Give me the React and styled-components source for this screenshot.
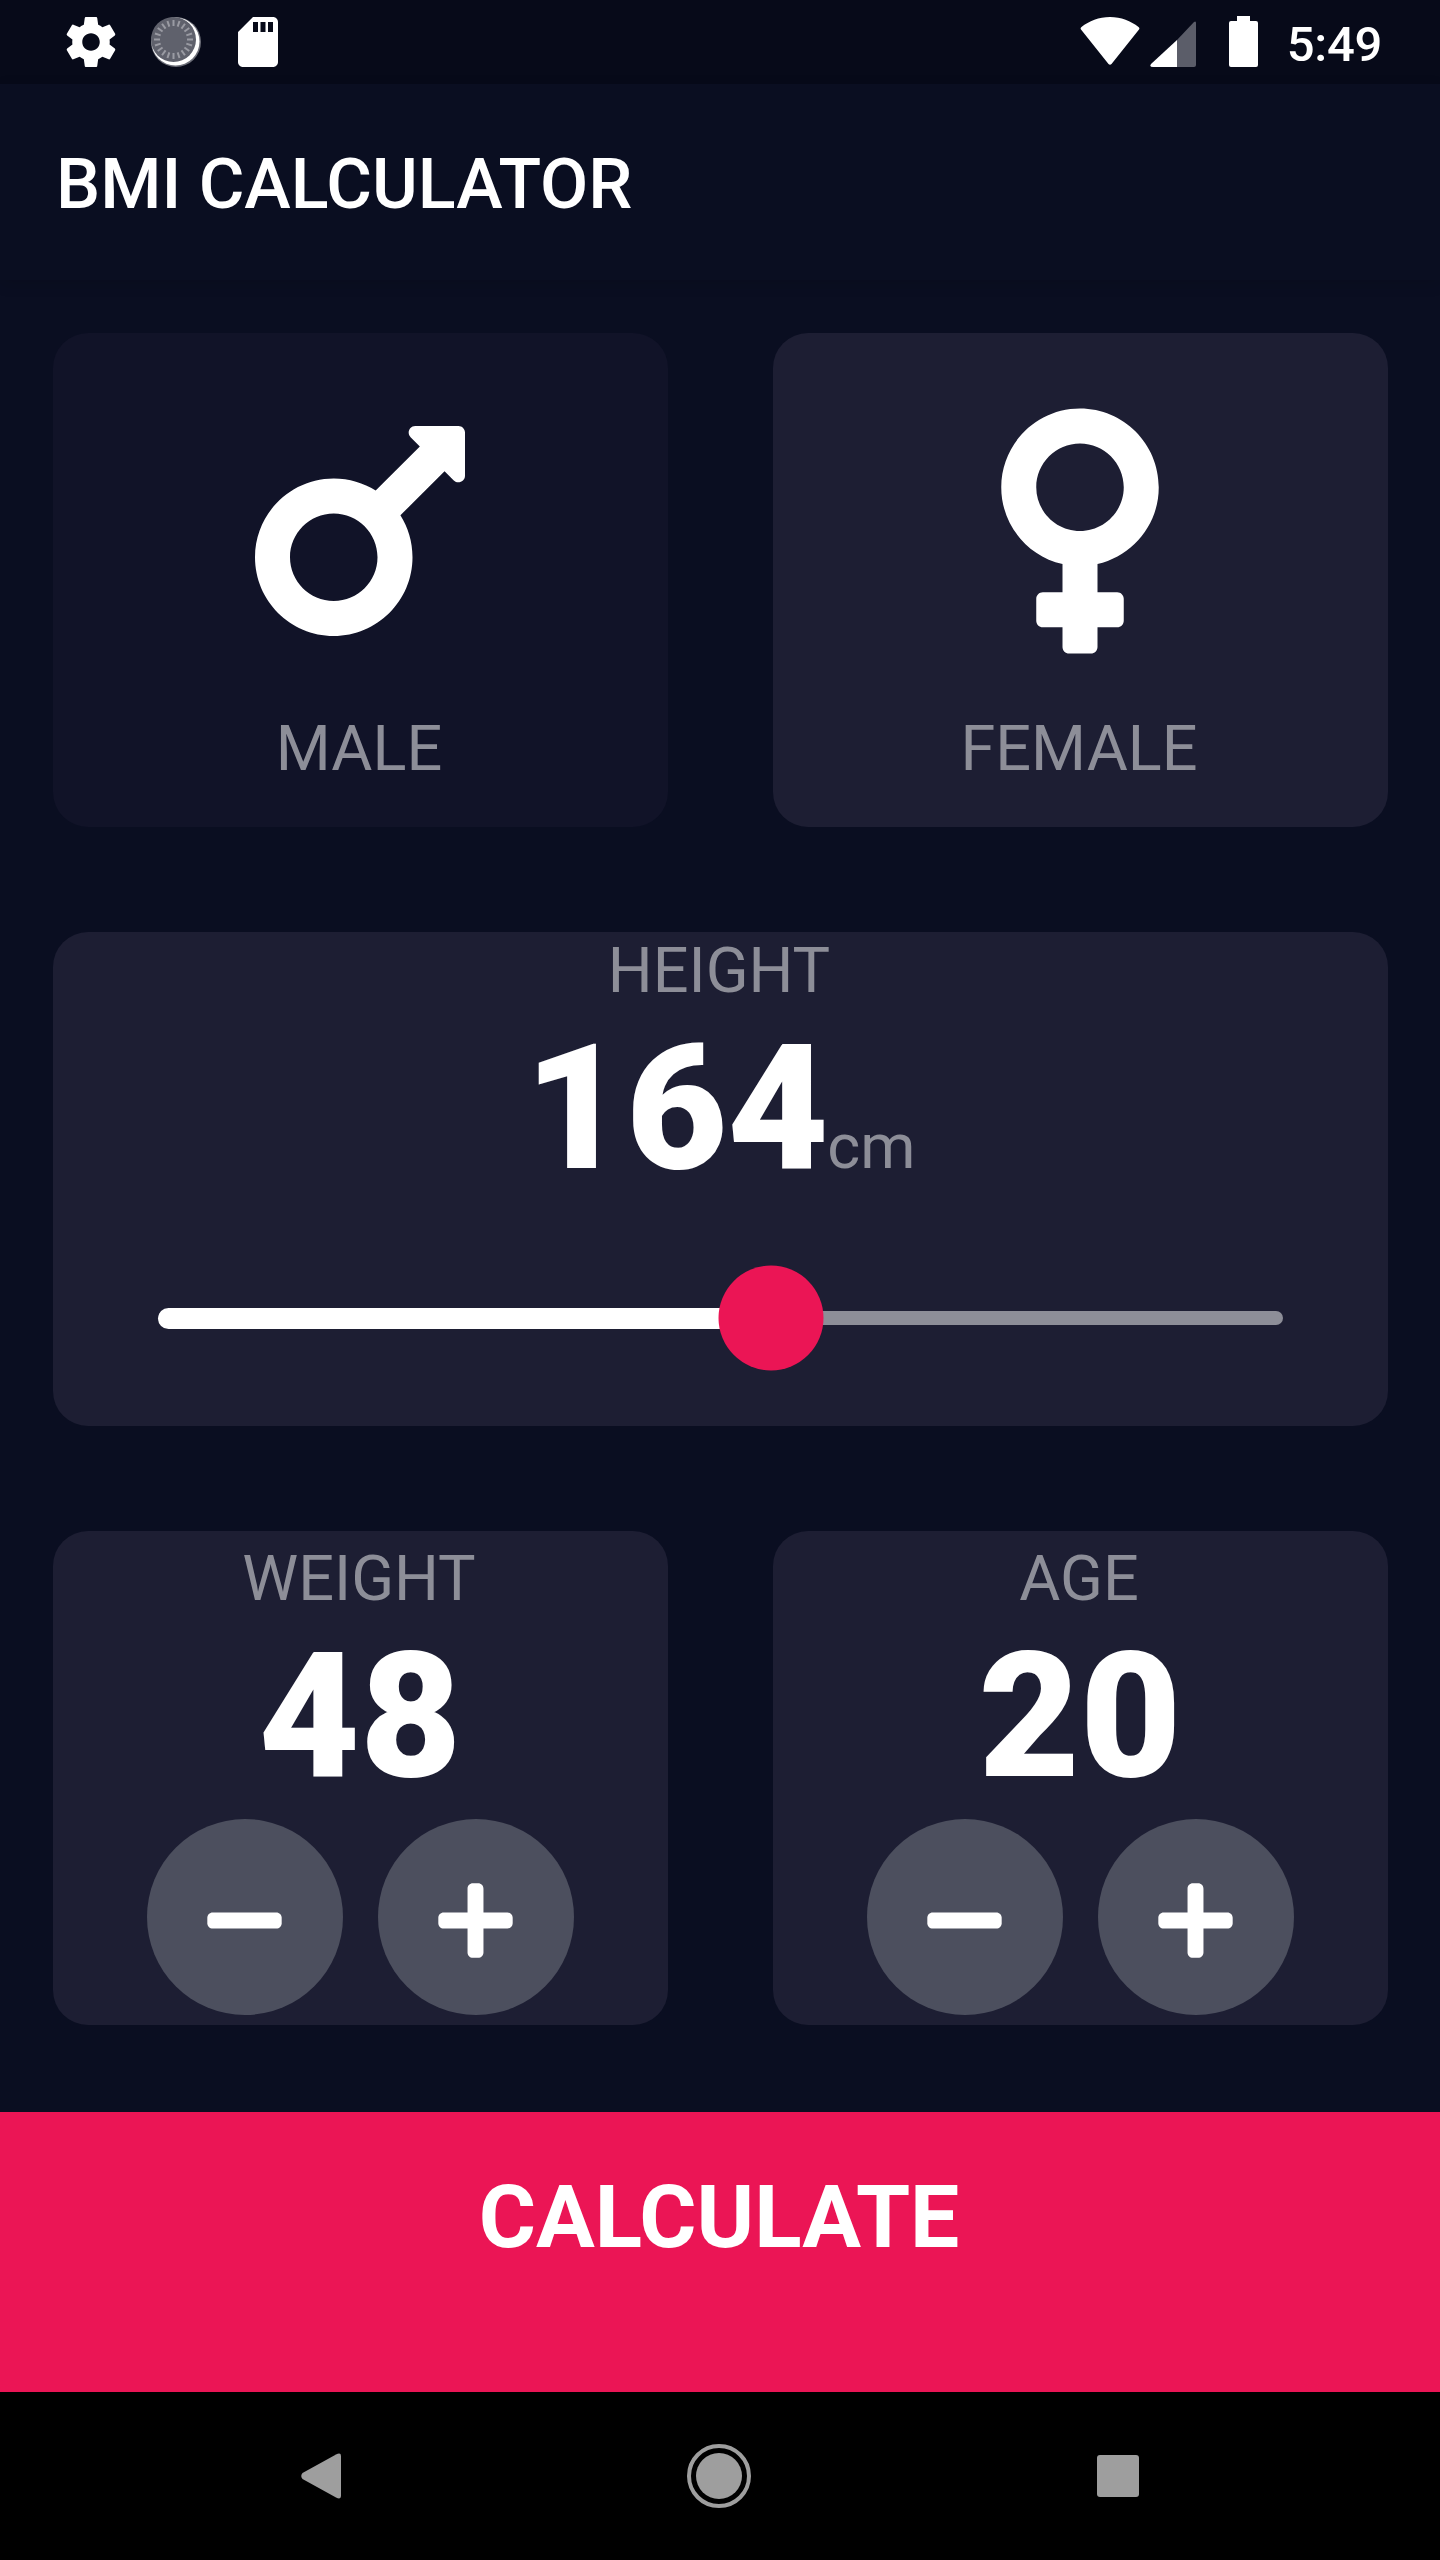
import React from 'react'
import styled, { createGlobalStyle } from 'styled-components'
import { FaMars, FaVenus, FaPlus, FaMinus } from 'react-icons/fa'

const GlobalStyle = createGlobalStyle`
  html, body {
    margin: 0;
    padding: 0;
    background: #0a0e21;
  }
  * {
    box-sizing: border-box;
  }
`

const Screen = styled.div`
  width: 1440px;
  height: 2560px;
  display: flex;
  flex-direction: column;
  overflow: hidden;
  background: #0a0e21;
  color: #fff;
  font-family: Roboto, "Liberation Sans", sans-serif;
`

const StatusBar = styled.div`
  height: 84px;
  flex: none;
  display: flex;
  justify-content: space-between;
  align-items: flex-start;
  padding: 12px 58px 0 61px;
  background: #070a19;
`

const StatusGroup = styled.div`
  display: flex;
  align-items: flex-start;
  gap: ${(p) => p.$gap}px;
`

const StatusIcon = styled.svg`
  display: block;
  fill: #fff;
  flex: none;
  margin-top: ${(p) => p.$top || 0}px;
  margin-left: ${(p) => p.$left || 0}px;
`

const Clock = styled.span`
  font-size: 49px;
  line-height: 58px;
  font-weight: 500;
  letter-spacing: -0.3px;
  margin-left: 19px;
  margin-top: 4px;
`

const AppBar = styled.header`
  height: 196px;
  flex: none;
  display: flex;
  align-items: center;
  padding: 4px 0 0 56px;
  background: #0a0e21;
  box-shadow: 0 4px 14px rgba(0, 0, 0, 0.12);
  font-size: 70px;
  font-weight: 500;
`

const Body = styled.main`
  flex: 1;
  display: grid;
  grid-template-rows: repeat(3, 1fr);
  gap: 105px;
  padding: 52.5px 52.5px 87.5px;
  min-height: 0;
`

const Row = styled.div`
  display: grid;
  grid-template-columns: 1fr 1fr;
  gap: 105px;
  min-height: 0;
`

const Card = styled.section`
  background: ${(p) => (p.$dim ? '#111328' : '#1d1e33')};
  border-radius: 35px;
  display: flex;
  flex-direction: column;
  align-items: center;
  justify-content: ${(p) => p.$justify || 'center'};
  min-height: 0;
`

const GenderIcon = styled.div`
  height: 280px;
  display: flex;
  justify-content: center;
  margin-top: 15px;
  margin-bottom: 39px;
  svg {
    height: 280px;
    width: auto;
    display: block;
    fill: #fff;
  }
`

const Label = styled.div`
  font-size: 63px;
  line-height: 71px;
  padding: 3px 2px 0 0;
  color: #8d8e98;
`

const Reading = styled.div`
  display: flex;
  justify-content: center;
  align-items: baseline;
`

const Value = styled.span`
  font-size: 175px;
  line-height: 205px;
  font-weight: 900;
`

const Unit = styled.span`
  font-size: 63px;
  color: #8d8e98;
  margin-left: -1.5px;
`

const SliderArea = styled.div`
  flex: 1;
  align-self: stretch;
  display: flex;
  align-items: center;
  padding: 0 105px;
`

const Track = styled.div`
  flex: 1;
  position: relative;
  height: 14px;
  border-radius: 7px;
  background: #8d8e98;
`

const ActiveTrack = styled.div`
  position: absolute;
  left: 0;
  top: -3.5px;
  height: 21px;
  border-radius: 10.5px;
  background: #fff;
`

const Thumb = styled.div`
  position: absolute;
  top: 7px;
  width: 105px;
  height: 105px;
  border-radius: 50%;
  background: #eb1555;
  transform: translate(-50%, -50%);
`

const Steppers = styled.div`
  display: flex;
  gap: 35px;
`

const RoundButton = styled.button`
  width: 196px;
  height: 196px;
  border: none;
  border-radius: 50%;
  padding: 6px 0 0;
  background: #4c4f5e;
  display: flex;
  align-items: center;
  justify-content: center;
  svg {
    height: 85px;
    width: auto;
    fill: #fff;
    display: block;
  }
`

const CalculateButton = styled.button`
  height: 280px;
  flex: none;
  border: none;
  padding: 0 2px 70px 0;
  background: #eb1555;
  color: #fff;
  font-family: inherit;
  font-size: 87.5px;
  font-weight: 700;
`

const NavBar = styled.nav`
  height: 168px;
  flex: none;
  background: #000;
  display: flex;
  align-items: center;
  justify-content: center;
  gap: ${(p) => p.$gap}px;
  svg {
    display: block;
    fill: #9e9e9e;
  }
`

const spinnerTicks = Array.from({ length: 20 }, (_, i) => i * 18)

const SettingsIcon = () => (
  <StatusIcon width="60" height="60" viewBox="0 0 24 24">
    <path d="M19.43 12.98c.04-.32.07-.64.07-.98s-.03-.66-.07-.98l2.11-1.65c.19-.15.24-.42.12-.64l-2-3.46c-.12-.22-.39-.3-.61-.22l-2.49 1c-.52-.4-1.08-.73-1.69-.98l-.38-2.65C14.46 2.18 14.25 2 14 2h-4c-.25 0-.46.18-.49.42l-.38 2.65c-.61.25-1.17.59-1.69.98l-2.49-1c-.23-.09-.49 0-.61.22l-2 3.46c-.13.22-.07.49.12.64l2.11 1.65c-.04.32-.07.65-.07.98s.03.66.07.98l-2.11 1.65c-.19.15-.24.42-.12.64l2 3.46c.12.22.39.3.61.22l2.49-1c.52.4 1.08.73 1.69.98l.38 2.65c.03.24.24.42.49.42h4c.25 0 .46-.18.49-.42l.38-2.65c.61-.25 1.17-.59 1.69-.98l2.49 1c.23.09.49 0 .61-.22l2-3.46c.12-.22.07-.49-.12-.64l-2.11-1.65zM12 15.5c-1.93 0-3.5-1.57-3.5-3.5s1.57-3.5 3.5-3.5 3.5 1.57 3.5 3.5-1.57 3.5-3.5 3.5z" />
  </StatusIcon>
)

const SpinnerIcon = () => (
  <StatusIcon width="50" height="50" viewBox="0 0 50 50" $top={5}>
    <circle cx="25" cy="25" r="25" fill="#6c6e78" />
    <circle cx="24.500" cy="24.500" r="24" fill="#fff" />
    <circle cx="22.500" cy="22.500" r="22.500" fill="#5f616c" />
    {spinnerTicks.map((deg) => (
      <rect key={deg} x="21.500" y="3" width="2" height="6" fill="#9a9ba3" transform={`rotate(${deg} 22.5 22.5)`} />
    ))}
  </StatusIcon>
)

const SdCardIcon = () => (
  <StatusIcon width="60" height="60" viewBox="0 0 24 24" $left={-3}>
    <path d="M18 2h-8L4.020 8 4 20c0 1.100.9 2 2 2h12c1.100 0 2-.9 2-2V4c0-1.100-.9-2-2-2zm-6 6h-2V4h2v4zm3 0h-2V4h2v4zm3 0h-2V4h2v4z" />
  </StatusIcon>
)

const WifiIcon = () => (
  <StatusIcon width="60" height="48" viewBox="0 0 60 48" $top={5}>
    <path d="M1 12.500 Q0 11 1.500 10 C9 4 19 0 30 0 C41 0 51 4 58.500 10 Q60 11 59 12.500 L31.500 47 Q30 48.500 28.500 47 Z" />
  </StatusIcon>
)

const SignalIcon = () => (
  <StatusIcon width="47" height="47" viewBox="0 0 47 47" $top={8}>
    <path d="M46 3 V45 Q46 47 44 47 H27 V20 L44 2 Q46 0.500 46 3 Z" fill="#5b5d69" />
    <path d="M27 20 V47 H3 Q-1 47 1 44 Z" />
  </StatusIcon>
)

const BatteryIcon = () => (
  <StatusIcon width="29" height="51" viewBox="0 0 29 51" $top={4} $left={22}>
    <path d="M8 0 H21 V5 H27 Q29 5 29 7 V49 Q29 51 27 51 H2 Q0 51 0 49 V7 Q0 5 2 5 H8 Z" />
  </StatusIcon>
)

export default function App() {
  const height = 164
  const sliderPos = 54.5

  return (
    <Screen>
      <GlobalStyle />
      <StatusBar>
        <StatusGroup $gap={30}>
          <SettingsIcon />
          <SpinnerIcon />
          <SdCardIcon />
        </StatusGroup>
        <StatusGroup $gap={10}>
          <WifiIcon />
          <SignalIcon />
          <BatteryIcon />
          <Clock>5:49</Clock>
        </StatusGroup>
      </StatusBar>
      <AppBar>BMI CALCULATOR</AppBar>
      <Body>
        <Row>
          <Card $dim>
            <GenderIcon><FaMars /></GenderIcon>
            <Label>MALE</Label>
          </Card>
          <Card>
            <GenderIcon><FaVenus /></GenderIcon>
            <Label>FEMALE</Label>
          </Card>
        </Row>
        <Card $justify="flex-start">
          <Label>HEIGHT</Label>
          <Reading>
            <Value>{height}</Value>
            <Unit>cm</Unit>
          </Reading>
          <SliderArea>
            <Track>
              <ActiveTrack style={{ width: `${sliderPos}%` }} />
              <Thumb style={{ left: `${sliderPos}%` }} />
            </Track>
          </SliderArea>
        </Card>
        <Row>
          <Card>
            <Label>WEIGHT</Label>
            <Value>48</Value>
            <Steppers>
              <RoundButton><FaMinus /></RoundButton>
              <RoundButton><FaPlus /></RoundButton>
            </Steppers>
          </Card>
          <Card>
            <Label>AGE</Label>
            <Value>20</Value>
            <Steppers>
              <RoundButton><FaMinus /></RoundButton>
              <RoundButton><FaPlus /></RoundButton>
            </Steppers>
          </Card>
        </Row>
      </Body>
      <CalculateButton>CALCULATE</CalculateButton>
      <NavBar $gap={346}>
        <svg width="40" height="46" viewBox="0 0 40 46">
          <path d="M1.500 20 L35 1.500 Q40 -1 40 3 V43 Q40 47 35 44.500 L1.500 26 Q-1 23 1.500 20 Z" />
        </svg>
        <svg width="64" height="64" viewBox="0 0 64 64">
          <circle cx="32" cy="32" r="30" fill="none" stroke="#9e9e9e" strokeWidth="4" />
          <circle cx="32" cy="32" r="23" />
        </svg>
        <svg width="42" height="42" viewBox="0 0 42 42">
          <rect width="42" height="42" rx="3" />
        </svg>
      </NavBar>
    </Screen>
  )
}
